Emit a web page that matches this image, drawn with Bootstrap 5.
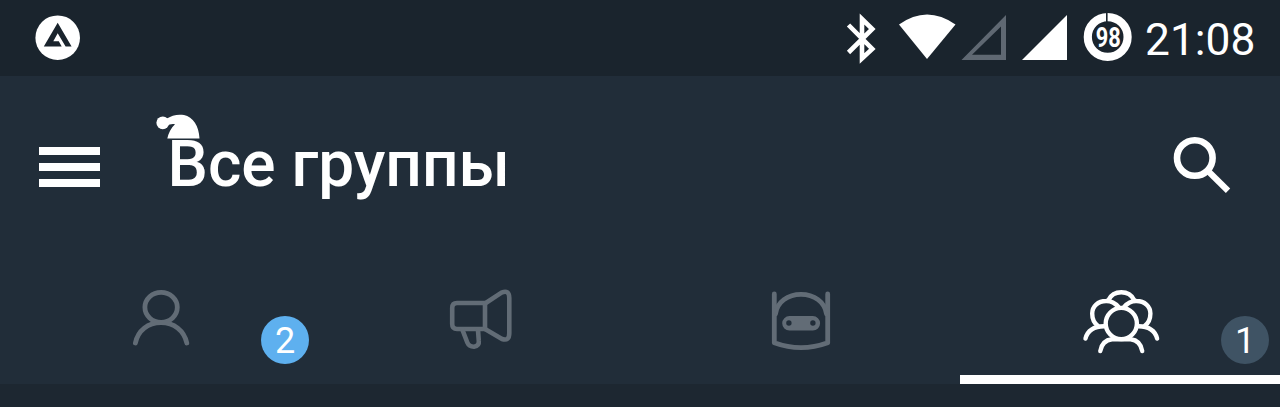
<!DOCTYPE html>
<html lang="ru">
<head>
  <meta charset="UTF-8" />
  <title>Все группы</title>
  <meta name="viewport" content="width=device-width, initial-scale=1" />
  <link href="https://cdn.jsdelivr.net/npm/bootstrap@5.3.0/dist/css/bootstrap.min.css" rel="stylesheet" />
  <style>
    body {
      background-color: #1d2731;
      font-family: Roboto, "Noto Sans", sans-serif;
      color: #fff;
      overflow: hidden;
    }
    svg {
      display: block;
      flex: none;
    }
    .status-bar {
      height: 76px;
      background-color: #1a242d;
      padding-left: 30px;
      padding-right: 24px;
    }
    .clock {
      font-size: 44.3px;
      line-height: 76px;
      width: 111px;
      padding-top: 3px;
    }
    .app-bar {
      height: 180px;
      background-color: #212d39;
      padding: 0 45px 0 39px;
    }
    .icon-button {
      background: none;
      border: 0;
      padding: 0;
    }
    .app-title {
      font-size: 64px;
      font-weight: 500;
      line-height: 76px;
      margin: 0 0 3px 67.5px;
    }
    .santa-hat {
      position: absolute;
      left: -12.5px;
      top: -13.5px;
    }
    .tab-strip {
      height: 128px;
      background-color: #212d39;
    }
    .tab-item {
      border-bottom: 9.5px solid transparent;
      color: #626c76;
    }
    .tab-item.active {
      border-bottom-color: #fff;
      color: #fff;
    }
    .counter {
      position: absolute;
      right: 11px;
      top: 60px;
      width: 48px;
      height: 48px;
      border-radius: 50%;
      background-color: #3f5364;
      color: #fff;
      font-size: 36px;
      line-height: 50px;
      text-align: center;
    }
    .counter.unread {
      background-color: #5eb0ef;
    }
  </style>
</head>
<body>

  <!-- Status bar -->
  <div class="status-bar d-flex align-items-center">
    <svg class="me-auto" width="56" height="76" viewBox="30 0 56 76">
      <circle cx="57.7" cy="37.7" r="22.3" fill="#fff" />
      <path d="M57.7 22.800L43.800 46.500H61.700L58.800 41.300H53.300L57.700 33.200L65.600 46.500H71.600Z" fill="#1a242d" />
    </svg>
    <svg width="45" height="76" viewBox="840 0 45 76" fill="none" stroke="#fff" stroke-width="4.6">
      <path d="M848.5 25L872.3 49L862 58.500V19L872.300 29L848.500 52.500" />
    </svg>
    <svg width="75" height="76" viewBox="885 0 75 76" fill="#fff">
      <path d="M899 24.500Q927 4.500 955.500 24.500L927 59Z" />
    </svg>
    <svg width="50" height="76" viewBox="960 0 50 76" fill="#5f6872">
      <path fill-rule="evenodd" d="M961.5 60H1006V15ZM972 54.700H1001V26.500Z" />
    </svg>
    <svg width="68" height="76" viewBox="1010 0 68 76" fill="#fff">
      <path d="M1022 60H1067V15Z" />
    </svg>
    <svg width="67" height="76" viewBox="1078 0 67 76">
      <circle cx="1107.7" cy="37" r="19.9" fill="none" stroke="#fff" stroke-width="8.2" />
      <path d="M1106.8 12V22" stroke="#1a242d" stroke-width="1.6" />
      <text x="1095.8" y="47.2" font-size="27.4" font-weight="700" textLength="25" lengthAdjust="spacingAndGlyphs" fill="#fff">98</text>
    </svg>
    <div class="clock text-nowrap">21:08</div>
  </div>

  <!-- App bar -->
  <header class="app-bar d-flex align-items-center">
    <button class="icon-button" type="button" aria-label="Меню">
      <svg width="61" height="180" viewBox="39 76 61 180" fill="#fff">
        <path d="M39 147H100V155H39ZM39 163H100V171H39ZM39 179H100V187H39Z" />
      </svg>
    </button>
    <h1 class="app-title position-relative text-nowrap">
      Все группы
      <svg class="santa-hat" width="46" height="27" viewBox="155 113 46 27" fill="#fff">
        <circle cx="162.8" cy="122.8" r="6.4" />
        <path d="M167.3 138.500C168.500 133 171 128 175 124.300C172 123.600 169 124.500 167 126L166 119C172 115 178 114 184 115C193 117 199 126 199.500 138.500Z" />
      </svg>
    </h1>
    <button class="icon-button ms-auto" type="button" aria-label="Поиск">
      <svg width="65" height="180" viewBox="1170 76 65 180" fill="none" stroke="#fff">
        <circle cx="1194.8" cy="158" r="17.8" stroke-width="6.6" />
        <path d="M1207.5 170.500L1228 190.700" stroke-width="6.2" />
      </svg>
    </button>
  </header>

  <!-- Tabs -->
  <nav class="tab-strip row row-cols-4 g-0">
    <div class="tab-item col position-relative d-flex justify-content-center">
      <svg width="80" height="118" viewBox="120 256 80 118" fill="none" stroke="currentColor" stroke-width="4.8" stroke-linecap="round">
        <ellipse cx="161.1" cy="307.3" rx="16.2" ry="15" />
        <path d="M135.4 343C138 330.500 148 322.700 161 322.700S184 330.500 186.800 343" />
      </svg>
      <span class="counter unread">2</span>
    </div>
    <div class="tab-item col position-relative d-flex justify-content-center">
      <svg width="80" height="118" viewBox="440 256 80 118" fill="none" stroke="currentColor" stroke-width="4.6" stroke-linecap="round" stroke-linejoin="round">
        <path d="M485 303H457Q452.200 303 452.200 308V324Q452.200 329 457 329H485Z" />
        <path d="M485 303.500L501.500 292.700Q509.300 289.500 509.300 298V333Q509.300 341.500 502 339L485 329" />
        <path d="M462.500 330L467.300 342.500Q469 346.700 474 346.700Q479.300 346 478.800 341L478 330" />
      </svg>
    </div>
    <div class="tab-item col position-relative d-flex justify-content-center">
      <svg width="80" height="118" viewBox="760 256 80 118" fill="none" stroke="currentColor" stroke-width="4.8" stroke-linecap="round" stroke-linejoin="round">
        <path d="M774.300 294V342.700Q801 352.500 827.700 342.700V294" />
        <path d="M775.500 314C777 302 788 294.300 801 294.300S825 302 826.500 314" />
        <path fill="currentColor" stroke="none" fill-rule="evenodd" d="M789.500 316H812.800A7.300 7.300 0 0 1 812.800 330.600H789.500A7.300 7.300 0 0 1 789.500 316ZM786.200 323A2.700 2.700 0 1 0 791.600 323A2.700 2.700 0 1 0 786.200 323ZM810.200 323A2.700 2.700 0 1 0 815.600 323A2.700 2.700 0 1 0 810.200 323Z" />
      </svg>
    </div>
    <div class="tab-item active col position-relative d-flex justify-content-center">
      <svg width="84" height="118" viewBox="1078 256 84 118" fill="none" stroke="currentColor" stroke-width="4.4" stroke-linecap="round">
        <circle cx="1121.3" cy="323.5" r="15.6" />
        <path d="M1100.300 351C1101.500 344 1106 340 1112 339.300H1130.600C1136.600 340 1141 344 1142.200 351" />
        <path d="M1118.500 307C1115 303 1110.500 300.800 1106 301C1098 301 1092.200 306.500 1092.200 313.500C1092.200 319 1094 323 1098 326" />
        <path d="M1124.100 307C1127.600 303 1132.100 300.800 1136.600 301C1144.600 301 1150.400 306.500 1150.400 313.500C1150.400 319 1148.600 323 1144.600 326" />
        <path d="M1108.500 300C1111 295 1116 292.300 1121.300 292.300S1131.600 295 1134.100 300" />
        <path d="M1085.500 338.500C1087.500 331 1094 326.500 1104 326.300" />
        <path d="M1157.100 338.500C1155.100 331 1148.600 326.500 1138.600 326.300" />
      </svg>
      <span class="counter">1</span>
    </div>
  </nav>

  <script src="https://cdn.jsdelivr.net/npm/bootstrap@5.3.0/dist/js/bootstrap.bundle.min.js"></script>
</body>
</html>
